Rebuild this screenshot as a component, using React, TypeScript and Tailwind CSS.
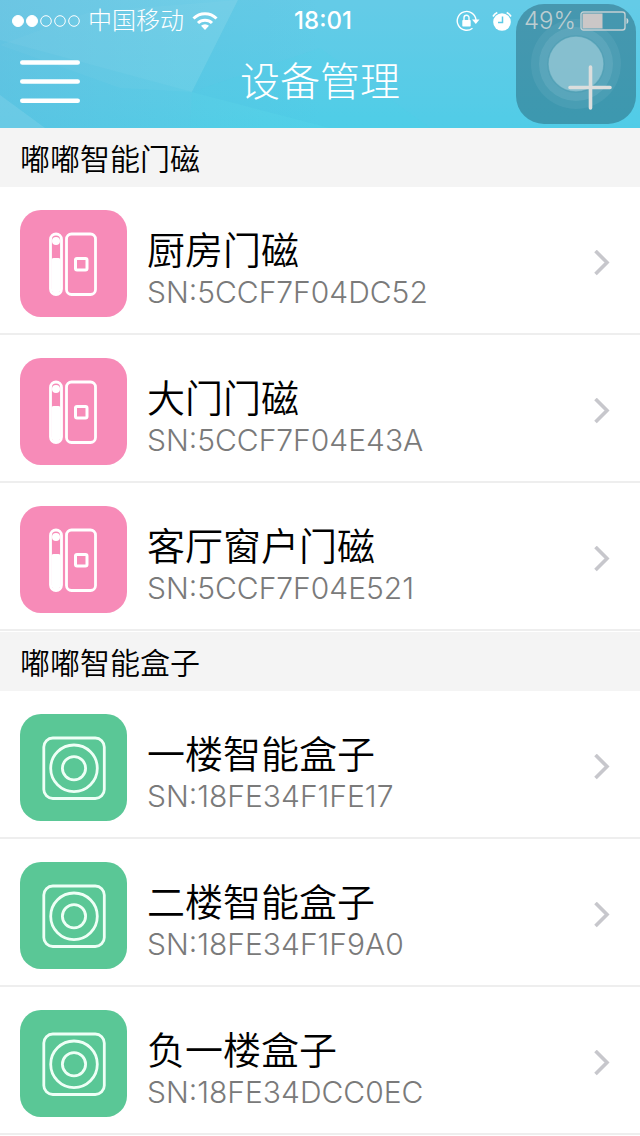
type DeviceKind = "sensor" | "box";

const groups: {
  title: string;
  kind: DeviceKind;
  devices: { name: string; sn: string }[];
}[] = [
  {
    title: "嘟嘟智能门磁",
    kind: "sensor",
    devices: [
      { name: "厨房门磁", sn: "5CCF7F04DC52" },
      { name: "大门门磁", sn: "5CCF7F04E43A" },
      { name: "客厅窗户门磁", sn: "5CCF7F04E521" },
    ],
  },
  {
    title: "嘟嘟智能盒子",
    kind: "box",
    devices: [
      { name: "一楼智能盒子", sn: "18FE34F1FE17" },
      { name: "二楼智能盒子", sn: "18FE34F1F9A0" },
      { name: "负一楼盒子", sn: "18FE34DCC0EC" },
    ],
  },
];

function StatusBar() {
  return (
    <div className="grid h-10 grid-cols-[1fr_auto_1fr] items-center pt-[2px] pr-[10px] pl-3 text-2xl">
      <div className="flex items-center gap-2">
        <svg width="68" height="12" viewBox="0 0 68 12" fill="none" stroke="#fff">
          <circle cx="6" cy="6" r="5.5" fill="#fff" />
          <circle cx="20" cy="6" r="5.5" fill="#fff" />
          <circle cx="34" cy="6" r="5.3" />
          <circle cx="48" cy="6" r="5.3" />
          <circle cx="62" cy="6" r="5.3" />
        </svg>
        <span className="font-light">中国移动</span>
        <svg width="26" height="20" viewBox="0 0 26 20" fill="none" stroke="#fff">
          <path d="M1.5 7.5a16.3 16.3 0 0 1 23 0" strokeWidth="3" />
          <path d="M6 12a10 10 0 0 1 14 0" strokeWidth="3" />
          <path d="M13 19l-4-4.2a5.7 5.7 0 0 1 8 0z" fill="#fff" stroke="none" />
        </svg>
      </div>
      <span className="pl-1 font-medium">18:01</span>
      <div className="flex items-center justify-end">
        <svg width="24" height="22" viewBox="0 0 24 22" fill="none" stroke="#fff">
          <path d="M16.5 18.2A9.4 9.4 0 1 1 20 10" strokeWidth="1.4" />
          <path d="M16 9.5h7.5L19.8 14z" fill="#fff" stroke="none" />
          <rect x="6.3" y="10" width="8.4" height="6.5" rx="0.8" fill="#fff" stroke="none" />
          <path d="M8 10V7.8a2.5 2.5 0 0 1 5 0V10" strokeWidth="1.4" />
        </svg>
        <svg className="ml-3" width="20" height="20" viewBox="0 0 20 20" fill="none">
          <circle cx="10" cy="11" r="8.8" fill="#fff" />
          <path d="M1 5.5a9 9 0 0 1 4.3-4M19 5.5a9 9 0 0 0-4.3-4" stroke="#fff" strokeWidth="1.6" />
          <path d="M10.5 5.5v6H6" stroke="#5ccae6" strokeWidth="1.5" />
        </svg>
        <span className="ml-3 font-light text-[#bccdd1]">49%</span>
        <svg className="ml-1" width="50" height="20" viewBox="0 0 50 20" fill="none">
          <rect x="1" y="1" width="44" height="18" rx="2.5" stroke="#c3d0d3" strokeWidth="1.4" />
          <rect x="2.5" y="2.5" width="20" height="15" fill="#cbc7c7" />
          <path d="M46.5 7c2.500.5 2.500 5.500 0 6z" fill="#cbd8db" />
        </svg>
      </div>
    </div>
  );
}

function AssistiveTouch() {
  return (
    <div className="pointer-events-none absolute top-1 right-1 flex size-[120px] items-center justify-center rounded-[28px] bg-[#23586a]/45">
      <svg width="92" height="92" viewBox="0 0 92 92" fill="#c8e6ee">
        <circle cx="46" cy="46" r="45" fillOpacity="0.08" />
        <circle cx="46" cy="46" r="37" fillOpacity="0.12" />
        <circle cx="46" cy="46" r="28" fillOpacity="0.4" stroke="#4a9bb0" strokeOpacity="0.6" strokeWidth="1.5" />
      </svg>
    </div>
  );
}

function Header() {
  return (
    <header className="relative bg-linear-to-b from-[#6dcfe8] to-[#52d0e8] text-white">
      <svg
        className="absolute inset-0 size-full"
        viewBox="0 0 640 128"
        preserveAspectRatio="none"
        aria-hidden="true"
      >
        <defs>
          <linearGradient id="shade" x1="0" y1="0" x2="1" y2="0">
            <stop offset="0" stopColor="#5fb8dc" stopOpacity="0.5" />
            <stop offset="0.5" stopColor="#5fb8dc" stopOpacity="0" />
          </linearGradient>
        </defs>
        <path d="M0 0h640v128H0z" fill="url(#shade)" />
        <path d="M0 45L90 12 238 0 192 92 120 88z" fill="#fff" fillOpacity="0.03" />
        <path d="M0 0H238L192 92 0 40z" fill="#fff" fillOpacity="0.04" />
        <path d="M238 0H640V128H330L192 92z" fill="#4cbfe2" fillOpacity="0.25" />
        <path d="M0 95L45 128H0z" fill="#fff" fillOpacity="0.1" />
        <path d="M192 92L320 48 430 128H190z" fill="#45d6ea" fillOpacity="0.1" />
      </svg>
      <AssistiveTouch />
      <div className="relative pb-1">
        <StatusBar />
        <div className="flex h-[84px] items-center justify-between pr-7 pl-5">
          <button type="button" aria-label="菜单">
            <svg width="60" height="44" viewBox="0 0 60 44" stroke="#fff" strokeWidth="4.6" strokeLinecap="round">
              <path d="M2.3 2.5h55.4M2.3 21.5h55.4M2.3 40.7h55.4" />
            </svg>
          </button>
          <h1 className="pl-2 text-[40px] leading-none font-light">设备管理</h1>
          <div className="flex w-[60px] justify-end">
            <button type="button" aria-label="添加">
              <svg width="44" height="56" viewBox="0 0 44 56" stroke="#dcdedd" strokeWidth="3.6" strokeLinecap="round">
                <path d="M2 33.5h40M22.5 13v41" />
              </svg>
            </button>
          </div>
        </div>
      </div>
    </header>
  );
}

function DeviceIcon({ kind }: { kind: DeviceKind }) {
  if (kind === "sensor") {
    return (
      <svg
        className="shrink-0 rounded-[21px] bg-[#f78bb8]"
        width="107"
        height="107"
        viewBox="0 0 107 107"
        fill="none"
        stroke="#fff"
        strokeWidth="2.8"
      >
        <rect x="30.5" y="24" width="11" height="60.5" rx="5.5" />
        <circle cx="36" cy="31" r="4" fill="#fff" stroke="none" />
        <path d="M31.500 50q0-2 2-2h5q2 0 2 2v29a4.500 4.500 0 0 1-9 0z" fill="#fff" stroke="none" />
        <rect x="46.5" y="24" width="29" height="60.5" rx="5" />
        <rect x="55.5" y="48.5" width="11.5" height="11.5" rx="1.5" strokeWidth="3" />
      </svg>
    );
  }
  return (
    <svg
      className="shrink-0 rounded-[21px] bg-[#5ac796]"
      width="107"
      height="107"
      viewBox="0 0 107 107"
      fill="none"
      stroke="#eefff6"
      strokeWidth="2.8"
    >
      <rect x="23.8" y="24" width="60.5" height="60.5" rx="9" />
      <circle cx="54" cy="54.3" r="23.3" />
      <circle cx="54" cy="54.3" r="11.6" />
    </svg>
  );
}

export default function App() {
  return (
    <div className="min-h-screen bg-white font-[Inter,'Noto_Sans_CJK_SC',sans-serif] text-black">
      <Header />
      <main className="flex flex-col gap-px">
        {groups.map((group) => (
          <section key={group.title}>
            <h2 className="flex h-[59px] items-center bg-[#f4f4f4] px-5 pt-[3px] text-[30px] leading-none font-[350]">
              {group.title}
            </h2>
            <ul>
              {group.devices.map((device) => (
                <li key={device.sn} className="border-b-2 border-[#eeeeee]">
                  <a href={`#${device.sn}`} className="flex h-[146px] items-center gap-5 pt-[7px] pr-7 pl-5">
                    <DeviceIcon kind={group.kind} />
                    <span className="flex min-w-0 flex-1 flex-col pt-[14px]">
                      <span className="text-[38px] leading-[42px] font-[350]">{device.name}</span>
                      <span className="text-[30px] leading-[42px] font-light text-[#7a7a7a]">
                        SN:{device.sn}
                      </span>
                    </span>
                    <svg
                      className="shrink-0"
                      width="20"
                      height="28"
                      viewBox="0 0 20 28"
                      fill="none"
                      stroke="#c7c7cc"
                      strokeWidth="3.6"
                    >
                      <path d="M3.5 1L15 12.5 3.5 24" />
                    </svg>
                  </a>
                </li>
              ))}
            </ul>
          </section>
        ))}
      </main>
    </div>
  );
}
